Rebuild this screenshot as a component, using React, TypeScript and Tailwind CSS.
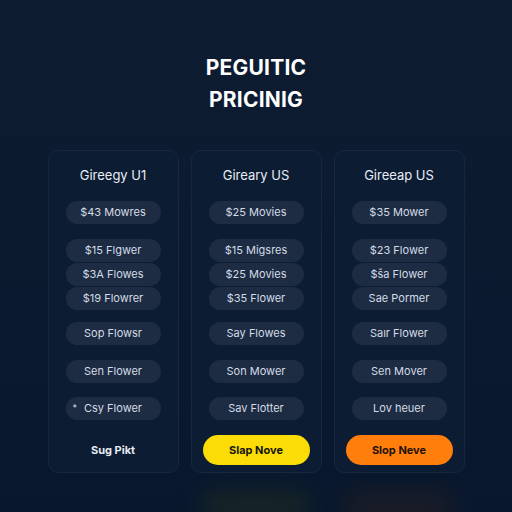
import React from 'react';

type Plan = {
  name: string;
  rows: string[];
  extra: string[];
  cta: string;
  tone: 'plain' | 'yellow' | 'orange';
  dot?: boolean;
};

const plans: Plan[] = [
  {
    name: 'Gireegy U1',
    rows: ['$43 Mowres', '$15 Flgwer', '$3A Flowes', '$19 Flowrer'],
    extra: ['Sop Flowsr', 'Sen Flower', 'Csy Flower'],
    cta: 'Sug Pikt',
    tone: 'plain',
    dot: true,
  },
  {
    name: 'Gireary US',
    rows: ['$25 Movies', '$15 Migsres', '$25 Movies', '$35 Flower'],
    extra: ['Say Flowes', 'Son Mower', 'Sav Flotter'],
    cta: 'Slap Nove',
    tone: 'yellow',
  },
  {
    name: 'Gireeap US',
    rows: ['$35 Mower', '$23 Flower', '$ša Flower', 'Sae Pormer'],
    extra: ['Saır Flower', 'Sen Mover', 'Lov heuer'],
    cta: 'Slop Neve',
    tone: 'orange',
  },
];

const Pill: React.FC<{ label: string; className?: string; dot?: boolean }> = ({ label, className = '', dot }) => (
  <div
    className={`relative mx-[17px] h-[23px] rounded-full bg-[#1d2c42] flex items-center justify-center text-[11px] text-[#d3dbe6] ${className}`}
  >
    {dot && <span className="absolute left-[7px] top-[4px] text-[9px] text-[#d3dbe6]">*</span>}
    {label}
  </div>
);

const Card: React.FC<{ plan: Plan }> = ({ plan }) => {
  const cta =
    plan.tone === 'yellow'
      ? 'bg-[#fbdc06] text-[#15150c] font-bold'
      : plan.tone === 'orange'
      ? 'bg-[#ff7e0c] text-[#1f1206] font-bold'
      : 'bg-transparent text-[#e6ebf2] font-bold';
  return (
    <div className="w-[131px] rounded-[10px] border border-[#18273d] bg-[#0c1c33] pt-[16px] pb-[7px] flex flex-col">
      <div className="text-center text-[13px] leading-[16px] text-[#e8edf4]">{plan.name}</div>
      <Pill label={plan.rows[0]} className="mt-[18px]" />
      <Pill label={plan.rows[1]} className="mt-[15px]" />
      <Pill label={plan.rows[2]} className="mt-[1px]" />
      <Pill label={plan.rows[3]} className="mt-[1px]" />
      <Pill label={plan.extra[0]} className="mt-[12px]" />
      <Pill label={plan.extra[1]} className="mt-[15px]" />
      <Pill label={plan.extra[2]} className="mt-[14px]" dot={plan.dot} />
      <div
        className={`mx-[11px] mt-[15px] h-[30px] rounded-full flex items-center justify-center text-[11px] ${cta}`}
      >
        {plan.cta}
      </div>
    </div>
  );
};

const App: React.FC = () => (
  <div
    className="relative w-[512px] h-[512px] overflow-hidden bg-gradient-to-b from-[#0d1c31] via-[#0b1a2f] to-[#08172d] flex flex-col items-center"
    style={{ fontFamily: 'Inter, "Noto Sans", sans-serif' }}
  >
    <div className="absolute left-[200px] top-[492px] w-[112px] h-[30px] rounded-full bg-[#4a5010] opacity-25 blur-md" />
    <div className="absolute left-[343px] top-[492px] w-[112px] h-[30px] rounded-full bg-[#5a3010] opacity-25 blur-md" />
    <h1 className="mt-[52px] text-center text-[21px] leading-[32px] font-bold text-white tracking-[0.2px]">
      PEGUITIC
      <br />
      PRICINIG
    </h1>
    <div className="relative mt-[34px] flex gap-[12px]">
      {plans.map((p) => (
        <Card key={p.name} plan={p} />
      ))}
    </div>
  </div>
);

export default App;
